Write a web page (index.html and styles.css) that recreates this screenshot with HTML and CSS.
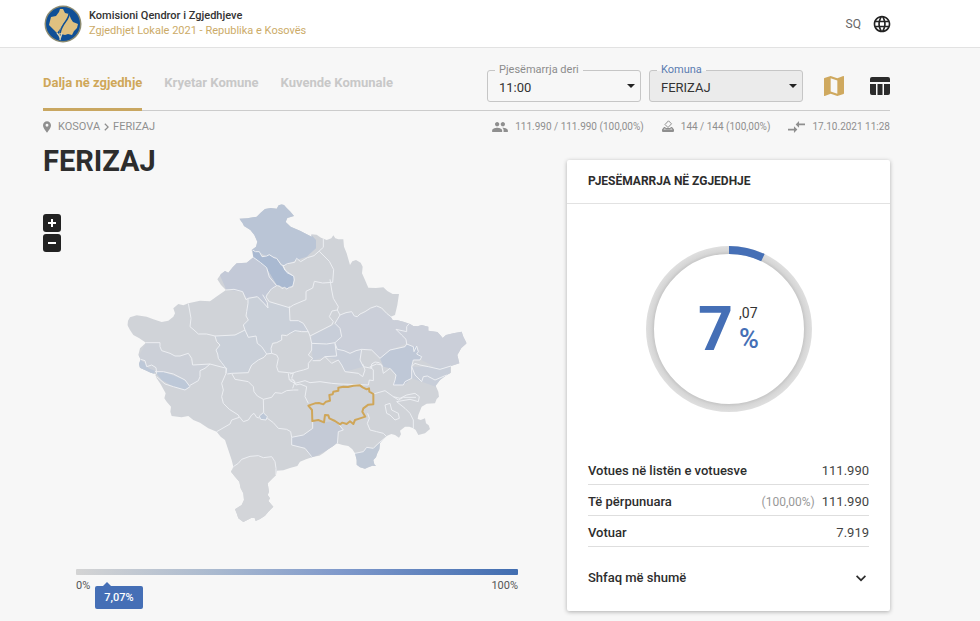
FILE: index.html
```html
<!DOCTYPE html>
<html lang="sq">
<head>
<meta charset="utf-8">
<meta name="viewport" content="width=device-width, initial-scale=1">
<title>Komisioni Qendror i Zgjedhjeve</title>
<link rel="stylesheet" href="styles.css">
</head>
<body>
<header class="topbar">
  <a class="brand" href="#">
    <svg class="logo" viewBox="0 0 38 38" aria-hidden="true">
      <circle cx="19" cy="19" r="18.5" fill="#8b8a70"/>
      <circle cx="19" cy="19" r="17" fill="#0f4f96"/>
      <path fill="#dfc080" d="M15 7l1-3 3 0 2 4 4 1-1 5-4 4-4 6-3 4-3-3-5-5 1-4 1-4 5-1z"/>
      <path fill="#dfc080" d="M25 9l2 5 2 3 5 2-1 4-3 3-2 4-4-1-3 1-4-1-2 1 1-6 5-7z"/>
      <path fill="none" stroke="#dfd5b4" stroke-width="1.400" d="M16 35c1-3-1-5-3-7M16 34l2-6"/>
      <path fill="none" stroke="#0f4f96" stroke-width="1.600" d="M25 9c0 6-7 9-9 19"/>
    </svg>
    <span class="brand-text">
      <strong>Komisioni Qendror i Zgjedhjeve</strong>
      <span>Zgjedhjet Lokale 2021 - Republika e Kosovës</span>
    </span>
  </a>
  <button class="lang" type="button">
    <span>SQ</span>
    <svg viewBox="0 0 24 24" width="20" height="20" aria-hidden="true"><path fill="currentColor" d="M11.99 2C6.47 2 2 6.48 2 12s4.47 10 9.99 10C17.52 22 22 17.52 22 12S17.52 2 11.99 2zm6.93 6h-2.95c-.32-1.25-.78-2.45-1.38-3.56 1.84.63 3.37 1.91 4.33 3.56zM12 4.04c.83 1.2 1.48 2.53 1.91 3.96h-3.82c.43-1.43 1.08-2.76 1.91-3.96zM4.26 14C4.1 13.36 4 12.69 4 12s.1-1.36.26-2h3.38c-.08.66-.14 1.32-.14 2s.06 1.34.14 2H4.26zm.82 2h2.95c.32 1.25.78 2.45 1.38 3.56-1.84-.63-3.37-1.9-4.33-3.56zm2.95-8H5.08c.96-1.66 2.49-2.93 4.33-3.56C8.81 5.55 8.35 6.75 8.03 8zM12 19.96c-.83-1.2-1.48-2.53-1.91-3.96h3.82c-.43 1.43-1.08 2.76-1.91 3.96zM14.34 14H9.66c-.09-.66-.16-1.32-.16-2s.07-1.35.16-2h4.68c.09.65.16 1.32.16 2s-.07 1.34-.16 2zm.25 5.56c.6-1.11 1.06-2.31 1.38-3.56h2.95c-.96 1.65-2.49 2.93-4.33 3.56zM16.36 14c.08-.66.14-1.32.14-2s-.06-1.34-.14-2h3.38c.16.64.26 1.31.26 2s-.1 1.36-.26 2h-3.38z"/></svg>
  </button>
</header>

<main class="page">
  <div class="toolbar">
    <nav class="tabs">
      <a class="tab active" href="#">Dalja në zgjedhje</a>
      <a class="tab" href="#">Kryetar Komune</a>
      <a class="tab" href="#">Kuvende Komunale</a>
    </nav>
    <div class="controls">
      <div class="field">
        <label for="until">Pjesëmarrja deri</label>
        <select id="until"><option>11:00</option></select>
      </div>
      <div class="field current">
        <label for="komuna">Komuna</label>
        <select id="komuna"><option>FERIZAJ</option></select>
      </div>
      <div class="views">
        <button class="view on" type="button" aria-label="Harta"><svg viewBox="3 3 18 18" width="20" height="20"><path fill="currentColor" d="M20.500 3l-.16.03L15 5.100 9 3 3.360 4.900c-.21.07-.36.25-.36.48V20.500c0 .28.22.5.5.5l.16-.03L9 18.900l6 2.100 5.640-1.900c.21-.07.36-.25.36-.48V3.500c0-.28-.22-.5-.5-.5zM15 19l-6-2.110V5l6 2.110V19z"/></svg></button>
        <button class="view" type="button" aria-label="Tabela"><svg viewBox="0 0 20 20" width="20" height="20"><path fill="currentColor" d="M2 1h16a2 2 0 0 1 2 2v3H0V3a2 2 0 0 1 2-2zM0 8h6v11H2a2 2 0 0 1-2-2zM7.500 8h5v11h-5zM14 8h6v9a2 2 0 0 1-2 2h-4z"/></svg></button>
      </div>
    </div>
  </div>

  <div class="meta">
    <nav class="crumbs">
      <svg class="pin" viewBox="5 2 14 20" width="8" height="12" aria-hidden="true"><path fill="currentColor" d="M12 2C8.130 2 5 5.130 5 9c0 5.250 7 13 7 13s7-7.750 7-13c0-3.870-3.130-7-7-7zm0 9.500a2.500 2.500 0 0 1 0-5 2.500 2.500 0 0 1 0 5z"/></svg>
      <a href="#">KOSOVA</a>
      <svg viewBox="8 6 8 12" width="5" height="8" aria-hidden="true"><path fill="currentColor" d="M10 6L8.590 7.410 13.170 12l-4.580 4.590L10 18l6-6z"/></svg>
      <a href="#">FERIZAJ</a>
    </nav>
    <ul class="facts">
      <li><svg viewBox="1 5 22 14" width="16" height="10" aria-hidden="true"><path fill="currentColor" d="M16 11c1.660 0 2.990-1.340 2.990-3S17.660 5 16 5s-3 1.340-3 3 1.340 3 3 3zm-8 0c1.660 0 2.990-1.340 2.990-3S9.660 5 8 5 5 6.340 5 8s1.340 3 3 3zm0 2c-2.330 0-7 1.170-7 3.500V19h14v-2.500c0-2.330-4.670-3.500-7-3.500zm8 0c-.29 0-.62.02-.97.05 1.160.84 1.970 1.970 1.970 3.450V19h6v-2.500c0-2.330-4.670-3.500-7-3.500z"/></svg><span>111.990 / 111.990 (100,00%)</span></li>
      <li><svg viewBox="0 0 12 14" width="12" height="14" aria-hidden="true"><path fill="currentColor" fill-rule="evenodd" d="M2 7h1l1 1h4l1-1h1l2 2.500V11a1 1 0 0 1-1 1H1a1 1 0 0 1-1-1V9.500zM1.500 9.500h9l-1-1H9l-.8.800H3.800L3 8.500h-.5z"/><path fill="none" stroke="currentColor" d="M6.500.800l3 3-3.500 3.700-3-3z"/></svg><span>144 / 144 (100,00%)</span></li>
      <li><svg viewBox="2 5 20 14" width="17" height="12" aria-hidden="true"><path fill="currentColor" d="M9.010 14H2v2h7.010v3L13 15l-3.990-4v3zm5.980-1v-3H22V8h-7.010V5L11 9l3.990 4z"/></svg><span>17.10.2021 11:28</span></li>
    </ul>
  </div>

  <div class="content">
    <section class="map-panel">
      <h1>FERIZAJ</h1>
      <div class="map-area">
        <div class="zoom">
          <button type="button" aria-label="Zmadho"><svg viewBox="0 0 10 10" width="10" height="10"><path stroke="currentColor" stroke-width="2" d="M5 1v8M1 5h8"/></svg></button>
          <button type="button" aria-label="Zvogëlo"><svg viewBox="0 0 10 10" width="10" height="10"><path stroke="currentColor" stroke-width="2" d="M1 5h8"/></svg></button>
        </div>
        <svg class="map" viewBox="0 0 1050 990" role="img" aria-label="Harta e komunave">
          <defs>
            <clipPath id="country"><path d="M358 56L382 55 410 50 422 38 435 27 452 24 470 26 476 16 485 13 492 15 500 24 510 34 522 48 502 54 497 66 512 80 540 92 575 110 574 103 590 104 603 113 620 120 634 115 640 106 646 115 655 118 670 118 672 140 680 160 690 195 697 184 708 180 722 188 728 200 726 220 735 240 745 263 768 264 790 262 802 273 818 282 837 282 832 315 825 345 812 350 818 360 833 361 850 365 870 372 880 378 893 379 905 375 925 380 925 392 952 396 960 404 968 414 978 405 1000 400 1025 395 1030 410 1040 430 1024 444 1012 465 1018 490 993 498 993 518 980 525 960 540 947 557 955 575 957 590 950 597 945 610 920 611 905 620 895 645 893 657 902 660 915 655 918 670 926 676 930 687 915 700 895 705 887 690 880 685 868 680 855 680 840 692 843 703 837 713 825 705 814 702 800 708 790 718 780 730 778 748 772 760 768 772 760 780 763 793 768 798 757 797 745 802 735 806 720 802 710 794 710 780 705 760 697 748 685 738 668 735 650 730 640 738 625 748 610 760 598 767 580 770 558 778 540 785 532 798 510 804 490 811 470 812 468 825 455 838 443 850 447 875 443 885 450 895 445 903 460 920 445 935 435 947 420 957 407 963 404 954 395 953 382 960 370 966 355 955 350 940 345 928 365 915 372 900 370 880 362 865 358 845 345 830 333 815 340 800 335 780 325 750 315 720 302 710 290 695 265 685 240 668 220 660 205 648 185 652 155 648 151 635 153 620 140 605 133 595 137 580 122 553 110 535 105 522 92 518 75 510 60 503 57 492 62 478 55 465 60 445 78 428 58 415 40 405 30 390 22 375 24 362 30 352 50 346 80 350 100 358 125 366 145 362 160 350 165 340 160 325 175 312 190 316 205 310 240 302 270 304 292 288 318 270 303 255 292 238 303 222 315 213 325 218 338 202 350 190 380 188 390 180 400 172 395 150 408 140 412 125 403 105 391 90 372 78 368 70Z"/></clipPath>
          </defs>
          <g clip-path="url(#country)">
            <path class="land" d="M0 0h1050v990H0z"/>
            <path fill="#bac5d6" d="M340 0H540V80L575 106 588 120V145L560 170 530 180 490 198 465 170 440 170 415 155 390 150Z"/>
            <path fill="#c3c9d7" d="M280 180L400 172 440 205 470 257 438 284 440 318 415 290 384 300 368 275 318 268Z"/>
            <path fill="#a9b9d1" d="M398 152L420 155 427 170 445 165 470 175 495 210 522 228 520 255 505 265 490 262 470 255 440 205 400 172Z"/>
            <path fill="#cad0d9" d="M386 290L415 290 445 320 440 305 505 320 510 362 540 362 540 395 485 405 485 420 455 430 455 460 440 462 412 430 408 408 385 412 375 390 370 375 385 360 380 335ZM285 408L345 405 375 390 385 412 408 408 412 430 440 462 390 500 385 518 320 520 295 475 288 450 300 435Z"/>
            <path fill="#ccd0d8" d="M78 428H120L125 452 180 470 205 460 215 495 270 492 240 515 240 540 210 558 130 515 100 520 40 500Z"/>
            <path fill="#cbcfd9" d="M660 345L695 335 710 350 770 318 825 360 828 388 860 430 810 450 780 475 755 450 725 448 690 460 645 430 665 410 645 370ZM818 355L1050 370V500L993 500 960 510 905 480 895 455 860 430 828 388Z"/>
            <path fill="#bfc8d7" d="M780 475L810 450 855 440 860 432 880 440 890 438 895 455 905 470 900 480 880 480 875 500 875 535 850 555 820 555 828 525 810 505 790 500Z"/>
            <path fill="#c8ced9" d="M645 430L690 460 725 448 720 480 730 500 675 515 655 480 615 470 578 482 575 430ZM875 500L990 500V530L947 560 905 545 875 535ZM510 362L535 362 550 370 565 395 535 390 510 400ZM575 408L650 370 665 410 645 430H575Z"/>
            <path fill="#c4cad6" d="M515 712L550 705 578 685 578 663 612 667 645 663 670 690 655 695 652 735 575 775 555 745 515 735Z"/>
            <path fill="#c0c9d6" d="M700 760L730 755 740 742 760 745 785 725 785 810H700Z"/>
            <path fill="#bdc8d8" d="M105 515L130 515 195 540 210 560 195 570 160 560 125 540ZM55 475L75 490 85 505 105 512 100 525 50 510ZM430 638L442 650 438 660 422 658 418 648Z"/>
            <path fill="#d3d5d9" d="M330 815L360 780 390 769 440 773 460 770 468 800V840L480 990H320Z"/>
            <g class="borders">
              <path d="M398 150l8 5 12 0 8 15 14-2 8-4 14 9 8 2 14 20 8 2 10-6 22-4 6-12 12 10 20-12 20-6 28-25 0-40-8-4M490 198l4 12 26 18"/>
              <path d="M400 172l22 16 18 15 8 28 22 26-16 10-12 16-4 8 10 14 60 18 12-8 14-6 24-10 0-25 20-10 5-20 25 5 30-2 3-38-13-25-30-30"/>
              <path d="M318 270l24-2 26 7 10 24 7-4 27-5 20 20 12 14-2-16-14-24M472 257l8 2 6 7 8-4 6 5 8-5 10-2 5-20-2-12-20-10-12-20"/>
              <path d="M508 319L510 362 535 362 550 370 565 395 570 408 635 375 640 365 628 350 636 333 652 330 655 320 640 295 635 270 630 238M652 330L660 345 645 370 660 385 665 410 645 428 620 432 575 430 570 408"/>
              <path d="M660 345L678 338 695 335 703 348 712 350 720 342 735 335 752 324 770 318 785 324 800 340 825 360M870 368L860 380 860 395 828 388 845 405 858 418 860 432 880 440 882 455 890 438 895 455 890 462 905 470 900 480 880 480 875 500"/>
              <path d="M575 430L575 450 565 465 578 475 565 490 565 505M578 482L600 482 615 470 650 468 645 430 652 448 672 452 690 460 708 452 725 448 755 450 780 475 810 450 855 440 860 432M615 470L635 490 655 480 665 495 675 515 715 520 728 530 735 510 728 492M725 448L720 480 730 500 755 505 755 492 765 486 778 488 788 500"/>
              <path d="M565 505L550 510 530 515 510 522M510 542L525 550 555 542 570 548 600 545 635 550 660 552 745 555 748 540 760 542 760 510 750 500 770 492 785 495 790 520 810 505 828 525 825 540 820 555 850 555 855 545 875 535 875 500"/>
              <path d="M875 500L885 490 900 495 925 500 960 508 993 498M875 500L885 525 905 545 910 530 922 528 945 540 980 525"/>
              <path d="M760 582L795 572 820 590 840 595 860 585 885 580 898 590 895 605 870 598 830 605 855 625 870 640 880 660 880 685M820 590L835 600 850 592 888 592M795 615L810 610 815 630 835 640 838 655 825 660 810 645 800 640Z"/>
              <path d="M743 640L748 655 742 670 750 690 770 695 790 700 800 710 775 730 760 745 740 742 730 755 705 760M650 665L670 690 655 695 652 735M578 663L578 685 550 705 515 712 515 735 555 745 575 770"/>
              <path d="M205 310L213 355 210 380 222 390 235 402 260 402 285 408 345 405 375 390 370 375 385 360 378 348 380 335 384 310 384 295M285 408L290 425 300 435 288 450 293 462 295 475 305 488 318 505 318 520"/>
              <path d="M375 390L385 412 408 408 412 430 425 440 440 462 455 460 453 445 458 430 470 428 485 420 485 405 500 407 510 400 525 392 545 395 565 395M440 462L432 472 415 480 395 495 388 510 385 518 335 520M455 460L470 465 475 475 470 500 475 515 505 518 520 520 515 535 525 545 518 565"/>
              <path d="M78 428L120 428 120 440 125 452 150 460 165 468 180 468 205 460 215 475 218 495 270 492 300 500 320 505"/>
              <path d="M270 492L255 505 240 512 240 530 235 542 210 556M62 478L75 482 80 500 95 495 108 503 110 520 105 525M105 515L130 515 160 522 195 540 210 560 195 570 160 560 135 552 110 530"/>
              <path d="M320 505L318 520 305 550 310 570 305 590 310 610 328 628 355 645 358 652 335 660 330 672 290 695M322 522L335 520 345 538 385 545 400 560 402 575 412 588 430 598 455 592 465 578 485 580 500 572 520 570 535 570M430 598L431 638M358 650L370 665 385 660 395 645 402 640 410 652 418 654M442 655L460 668 475 685 500 688 512 695 515 712"/>
              <path d="M418 648L430 638 442 650 438 660 422 658ZM333 812L340 800 355 790 365 778 390 769 415 767 430 773 455 770 465 785 468 805 468 825"/>
              <path d="M505 520L508 540 520 540 528 555 540 552 560 560 555 590 565 610"/>
            </g>
          </g>
          <path class="selected" d="M565 617L585 610 597 609 610 613 618 605 630 602 628 585 638 583 640 575 655 572 655 563 670 560 684 561 700 557 720 556 728 562 740 568 747 565 748 575 760 582 760 613 745 614 730 625 727 635 736 650 720 655 705 660 700 672 690 664 680 672 667 668 660 673 645 663 628 655 625 646 615 645 612 667 595 660 577 663 576 630Z"/>
        </svg>
      </div>
      <div class="scale">
        <div class="scale-bar"></div>
        <div class="scale-ends"><span>0%</span><span>100%</span></div>
        <span class="scale-tip">7,07%</span>
      </div>
    </section>

    <section class="card">
      <h2>PJESËMARRJA NË ZGJEDHJE</h2>
      <div class="donut">
        <svg viewBox="0 0 168 168" aria-hidden="true">
          <defs><radialGradient id="ring" gradientUnits="userSpaceOnUse" cx="84" cy="84" r="83"><stop offset=".9" stop-color="#c4c4c4"/><stop offset=".94" stop-color="#d6d6d6"/><stop offset="1" stop-color="#dfdfdf"/></radialGradient></defs>
          <circle cx="84" cy="84" r="79" fill="none" stroke="url(#ring)" stroke-width="8"/>
          <circle cx="84" cy="84" r="79" fill="none" stroke="#456fb6" stroke-width="8" pathLength="100" stroke-dasharray="7.070 100" transform="rotate(-90 84 84)"/>
        </svg>
        <div class="donut-value">
          <span class="whole">7</span>
          <span class="fraction"><span>,07</span><b>%</b></span>
        </div>
      </div>
      <dl class="stats">
        <div><dt>Votues në listën e votuesve</dt><dd>111.990</dd></div>
        <div><dt>Të përpunuara</dt><dd><small>(100,00%)</small>111.990</dd></div>
        <div><dt>Votuar</dt><dd>7.919</dd></div>
      </dl>
      <button class="more" type="button"><span>Shfaq më shumë</span><svg viewBox="6 8 12 8" width="10" height="7" aria-hidden="true"><path fill="currentColor" d="M16.590 8.090L12 12.670 7.410 8.090 6 9.500l6 6 6-6z"/></svg></button>
    </section>
  </div>
</main>
</body>
</html>
```
FILE: styles.css
```css
* { box-sizing: border-box; }

body {
  margin: 0;
  background: #f7f7f7;
  color: #2d2d2d;
  font-family: Roboto, "Liberation Sans", sans-serif;
  font-size: 14px;
}

a { color: inherit; text-decoration: none; }
button { border: 0; padding: 0; background: none; color: inherit; font: inherit; cursor: pointer; }
svg { display: block; flex: none; }

.topbar {
  display: flex;
  align-items: center;
  justify-content: space-between;
  height: 48px;
  padding: 0 88px 0 44px;
  background: #fff;
  border-bottom: 1px solid #e2e2e2;
}

.brand { display: flex; align-items: center; gap: 7px; }
.logo { width: 38px; height: 38px; }
.brand-text { display: flex; flex-direction: column; padding-bottom: 2px; font-size: 11px; line-height: 15px; color: #ccab68; }
.brand-text strong { color: #333; font-weight: 500; }
.lang { display: flex; align-items: center; gap: 11px; font-size: 12px; color: #222; }
.lang span { color: #666; }

.page { padding: 0 90px 0 43px; }

.toolbar {
  display: flex;
  justify-content: space-between;
  height: 63px;
  border-bottom: 1px solid #ccc;
}

.tabs { display: flex; gap: 22px; }
.tab {
  height: 63px;
  padding-top: 26px;
  font-size: 13px;
  line-height: 18px;
  font-weight: 700;
  color: #c8c8c8;
}
.tab.active { color: #cfa759; border-bottom: 3px solid #c9a761; }

.controls { display: flex; gap: 8px; padding-top: 22px; }
.field { position: relative; width: 154px; height: 32px; }
.field label {
  position: absolute;
  top: -8px;
  left: 8px;
  padding: 0 4px;
  font-size: 11px;
  line-height: 15px;
  color: #8c8c8c;
  background: linear-gradient(#f7f7f7, #f7f7f7) 0 8px / 100% 1px no-repeat;
}
.field.current label { color: #5a7cb0; }
.field select {
  appearance: none;
  width: 100%;
  height: 32px;
  padding: 2px 11px 0;
  border: 1px solid #c6c6c6;
  border-radius: 3px;
  background: transparent;
  color: #333;
  font: 13px Roboto, sans-serif;
}
.field.current select { background: #ebebeb; }
.field::after {
  content: "";
  position: absolute;
  top: 14px;
  right: 6px;
  border: 4px solid transparent;
  border-top-color: #222;
  border-bottom: 0;
}
.views { display: flex; align-items: center; gap: 26px; height: 32px; padding-left: 13px; }
.view { color: #2b2b2b; }
.view.on { color: #cfa95f; }

.meta {
  display: flex;
  justify-content: space-between;
  align-items: center;
  height: 31px;
  font-size: 11px;
  color: #8f8f8f;
}
.crumbs { display: flex; align-items: center; gap: 4px; }
.pin { margin-right: 3px; }
.facts { display: flex; gap: 18px; margin: 0; padding: 0; list-style: none; font-size: 10px; }
.facts li { display: flex; align-items: center; gap: 7px; }

.content { display: grid; grid-template-columns: minmax(0, 475px) 323px; justify-content: space-between; align-items: start; }

h1 { margin: 0; padding-top: 1px; font-size: 29px; line-height: 36px; font-weight: 700; }
.map-area { position: relative; padding: 21px 0 0 77px; }
.map { width: 100%; max-width: 350px; height: auto; }
.zoom { position: absolute; top: 35px; left: 0; display: flex; flex-direction: column; gap: 2px; }
.zoom button { display: grid; place-items: center; width: 18px; height: 18px; border-radius: 3px; background: #222; color: #fff; }
.land { fill: #d0d3d8; }
.borders path { fill: none; stroke: #eceef2; stroke-width: 3; stroke-linejoin: round; }
.selected { fill: #d0d3d8; stroke: #cfa659; stroke-width: 6; stroke-linejoin: round; }

.scale { position: relative; margin: 39px 0 0 33px; }
.scale-bar { height: 6px; border-radius: 1px; background: linear-gradient(90deg, #d4d4d4, #a9b9cf 32%, #7f99cb 60%, #416db0); }
.scale-ends { display: flex; justify-content: space-between; padding-top: 3px; font-size: 11px; line-height: 16px; color: #555; }
.scale-tip {
  position: absolute;
  top: 17px;
  left: 19px;
  width: 48px;
  border-radius: 2px;
  background: #456fb6;
  color: #fff;
  font-size: 11px;
  font-weight: 500;
  line-height: 23px;
  text-align: center;
}
.scale-tip::before {
  content: "";
  position: absolute;
  top: -4px;
  left: 8px;
  border: 4px solid transparent;
  border-top: 0;
  border-bottom-color: #456fb6;
}

.card { margin: 18px 0 10px; background: #fff; border-radius: 2px; box-shadow: 0 1px 4px rgba(0, 0, 0, .3); }
h2 {
  margin: 0;
  padding: 0 21px;
  border-bottom: 1px solid #e2e2e2;
  font-size: 12px;
  line-height: 43px;
  font-weight: 700;
}
.donut { display: grid; place-items: center; padding: 41px 0; }
.donut > * { grid-area: 1 / 1; }
.donut > svg { width: 168px; height: 168px; }
.donut-value { display: flex; align-items: center; gap: 6px; color: #456fb6; }
.whole { font-size: 61px; line-height: 72px; font-weight: 700; }
.fraction { display: flex; flex-direction: column; line-height: 20px; font-size: 14px; color: #333; }
.fraction b { font-size: 27px; line-height: 32px; font-weight: 500; color: #456fb6; }

.stats { margin: 0 21px; }
.stats div {
  display: flex;
  justify-content: space-between;
  align-items: center;
  height: 31px;
  padding-top: 2px;
  border-bottom: 1px solid #dedede;
}
dt, .more { font-size: 13px; font-weight: 500; }
dd { margin: 0; font-size: 13px; color: #444; }
small { margin-right: 7px; font-size: 12px; color: #999; }
.more {
  display: flex;
  justify-content: space-between;
  align-items: center;
  width: 100%;
  padding: 20px 24px 22px 21px;
  line-height: 22px;
}
```
